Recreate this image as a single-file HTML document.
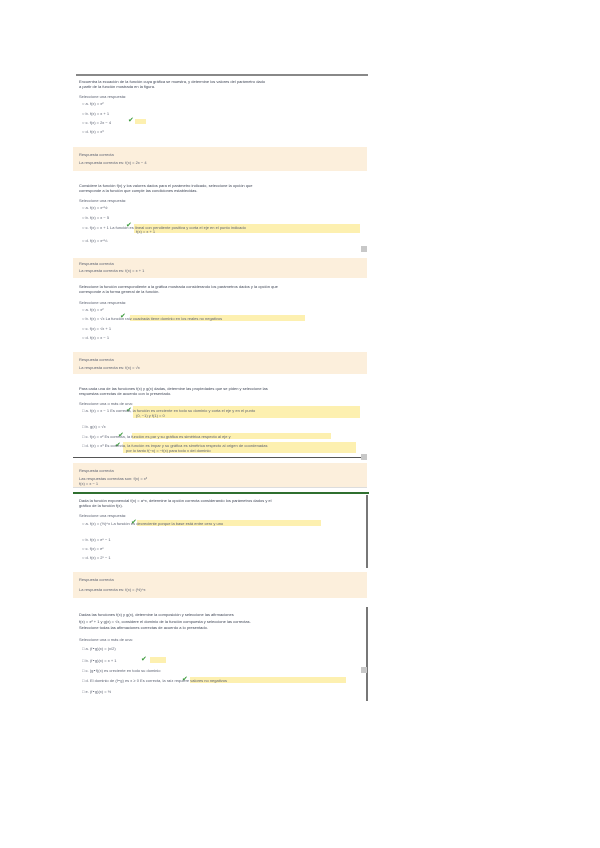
<!DOCTYPE html>
<html><head><meta charset="utf-8"><style>
body{margin:0;width:600px;height:848px;background:#fff;position:relative;overflow:hidden;font-family:"Liberation Sans",sans-serif}
.a{position:absolute}
.t{position:absolute;font-size:4px;line-height:5px;color:#5c6272;white-space:nowrap}
.d{color:#3f4656}
.fb{position:absolute;left:73px;width:294px;background:#fcefdc}
.hl{position:absolute;background:#fdf0b0}
.ck{position:absolute;color:#3a9a3a;font-size:7px;line-height:7px}
.sq{position:absolute;width:6px;height:6px;background:#c8c8c8}
.vl{position:absolute;width:2px;background:#777;left:366px}
</style></head><body>
<div class="a" style="left:76px;top:74px;width:292px;height:2px;background:#888"></div>
<div class="t d" style="left:79px;top:79px">Encuentra la ecuación de la función cuya gráfica se muestra, y determine los valores del parámetro dado</div>
<div class="t d" style="left:79px;top:84px">a partir de la función mostrada en la figura.</div>
<div class="t" style="left:79px;top:94px">Seleccione una respuesta:</div>
<div class="t" style="left:82px;top:101px">○ a.  f(x) = x²</div>
<div class="t" style="left:82px;top:111px">○ b.  f(x) = x + 1</div>
<div class="hl" style="left:135px;top:119px;width:11px;height:5px"></div>
<div class="t" style="left:82px;top:120px">○ c.  f(x) = 2x − 4</div><div class="ck" style="left:128px;top:117px">✔</div>
<div class="t" style="left:82px;top:129px">○ d.  f(x) = x³</div>
<div class="fb" style="top:147px;height:24px"></div>
<div class="t" style="left:79px;top:152px">Respuesta correcta</div>
<div class="t" style="left:79px;top:160px">La respuesta correcta es: f(x) = 2x − 4</div>

<div class="t d" style="left:79px;top:183px">Considere la función f(x) y los valores dados para el parámetro indicado, seleccione la opción que</div>
<div class="t d" style="left:79px;top:188px">corresponde a la función que cumple las condiciones establecidas.</div>
<div class="t" style="left:79px;top:198px">Seleccione una respuesta:</div>
<div class="t" style="left:82px;top:205px">○ a.  f(x) = x^½</div>
<div class="t" style="left:82px;top:215px">○ b.  f(x) = x − 5</div>
<div class="hl" style="left:134px;top:224px;width:226px;height:9px"></div>
<div class="ck" style="left:126px;top:222px">✔</div>
<div class="t" style="left:82px;top:225px">○ c.  f(x) = x + 1   La función es lineal con pendiente positiva y corta el eje en el punto indicado</div>
<div class="t" style="left:136px;top:229px">f(x) = x + 1</div>
<div class="t" style="left:82px;top:238px">○ d.  f(x) = x^⅓</div>
<div class="sq" style="left:361px;top:246px"></div>
<div class="fb" style="top:258px;height:20px"></div>
<div class="t" style="left:79px;top:261px">Respuesta correcta</div>
<div class="t" style="left:79px;top:268px">La respuesta correcta es: f(x) = x + 1</div>

<div class="t d" style="left:79px;top:284px">Seleccione la función correspondiente a la gráfica mostrada considerando los parámetros dados y la opción que</div>
<div class="t d" style="left:79px;top:289px">corresponde a la forma general de la función.</div>
<div class="t" style="left:79px;top:300px">Seleccione una respuesta:</div>
<div class="t" style="left:82px;top:307px">○ a.  f(x) = x²</div>
<div class="hl" style="left:130px;top:315px;width:175px;height:6px"></div>
<div class="ck" style="left:120px;top:313px">✔</div>
<div class="t" style="left:82px;top:316px">○ b.  f(x) = √x    La función raíz cuadrada tiene dominio en los reales no negativos</div>
<div class="t" style="left:82px;top:326px">○ c.  f(x) = √x + 1</div>
<div class="t" style="left:82px;top:335px">○ d.  f(x) = x − 1</div>
<div class="fb" style="top:352px;height:22px"></div>
<div class="t" style="left:79px;top:357px">Respuesta correcta</div>
<div class="t" style="left:79px;top:365px">La respuesta correcta es: f(x) = √x</div>

<div class="t d" style="left:79px;top:386px">Para cada una de las funciones f(x) y g(x) dadas, determine las propiedades que se piden y seleccione las</div>
<div class="t d" style="left:79px;top:391px">respuestas correctas de acuerdo con lo presentado.</div>
<div class="t" style="left:79px;top:401px">Seleccione una o más de una:</div>
<div class="hl" style="left:133px;top:406px;width:227px;height:12px"></div>
<div class="ck" style="left:126px;top:407px">✔</div>
<div class="t" style="left:82px;top:408px">□ a.  f(x) = x − 1    Es correcta, la función es creciente en todo su dominio y corta el eje y en el punto</div>
<div class="t" style="left:136px;top:413px">(0, −1) y f(1) = 0</div>
<div class="t" style="left:82px;top:424px">□ b.  g(x) = √x</div>
<div class="hl" style="left:132px;top:433px;width:199px;height:6px"></div>
<div class="ck" style="left:118px;top:432px">✔</div>
<div class="t" style="left:82px;top:434px">□ c.  f(x) = x²   Es correcta, la función es par y su gráfica es simétrica respecto al eje y</div>
<div class="hl" style="left:123px;top:442px;width:233px;height:11px"></div>
<div class="ck" style="left:115px;top:442px">✔</div>
<div class="t" style="left:82px;top:443px">□ d.  f(x) = x³   Es correcta, la función es impar y su gráfica es simétrica respecto al origen de coordenadas</div>
<div class="t" style="left:126px;top:448px">por lo tanto f(−x) = −f(x) para todo x del dominio</div>
<div class="a" style="left:73px;top:457px;width:292px;height:1px;background:#555"></div>
<div class="sq" style="left:361px;top:454px"></div>
<div class="fb" style="top:463px;height:25px"></div>
<div class="t" style="left:79px;top:468px">Respuesta correcta</div>
<div class="t" style="left:79px;top:476px">Las respuestas correctas son: f(x) = x³</div>
<div class="t" style="left:79px;top:481px">f(x) = x − 1</div>
<div class="a" style="left:73px;top:487px;width:294px;height:1px;background:#ddd"></div>

<div class="a" style="left:73px;top:492px;width:296px;height:2px;background:#2f6f2f"></div>
<div class="vl" style="top:495px;height:73px"></div>
<div class="t d" style="left:79px;top:498px">Dada la función exponencial f(x) = a^x, determine la opción correcta considerando los parámetros dados y el</div>
<div class="t d" style="left:79px;top:503px">gráfico de la función f(x).</div>
<div class="t" style="left:79px;top:513px">Seleccione una respuesta:</div>
<div class="hl" style="left:137px;top:520px;width:184px;height:6px"></div>
<div class="ck" style="left:131px;top:519px">✔</div>
<div class="t" style="left:82px;top:521px">○ a.  f(x) = (½)^x      La función es decreciente porque la base está entre cero y uno</div>
<div class="t" style="left:82px;top:537px">○ b.  f(x) = eˣ − 1</div>
<div class="t" style="left:82px;top:546px">○ c.  f(x) = eˣ</div>
<div class="t" style="left:82px;top:555px">○ d.  f(x) = 2ˣ − 1</div>
<div class="fb" style="top:572px;height:26px"></div>
<div class="t" style="left:79px;top:577px">Respuesta correcta</div>
<div class="t" style="left:79px;top:587px">La respuesta correcta es: f(x) = (½)^x</div>

<div class="vl" style="top:607px;height:94px"></div>
<div class="t d" style="left:79px;top:612px">Dadas las funciones f(x) y g(x), determine la composición y seleccione las afirmaciones</div>
<div class="t d" style="left:79px;top:619px">f(x) = x² + 1 y g(x) = √x, considere el dominio de la función compuesta y seleccione las correctas.</div>
<div class="t d" style="left:79px;top:625px">Seleccione todas las afirmaciones correctas de acuerdo a lo presentado.</div>
<div class="t" style="left:79px;top:637px">Seleccione una o más de una:</div>
<div class="t" style="left:82px;top:646px">□ a.  (f∘g)(x) = (x/2)</div>
<div class="hl" style="left:150px;top:657px;width:16px;height:6px"></div>
<div class="ck" style="left:141px;top:656px">✔</div>
<div class="t" style="left:82px;top:658px">□ b.  (f∘g)(x) = x + 1</div>
<div class="t" style="left:82px;top:668px">□ c.  (g∘f)(x) es creciente en todo su dominio</div>
<div class="sq" style="left:361px;top:667px"></div>
<div class="hl" style="left:190px;top:677px;width:156px;height:6px"></div>
<div class="ck" style="left:182px;top:676px">✔</div>
<div class="t" style="left:82px;top:678px">□ d.  El dominio de (f∘g) es x ≥ 0      Es correcta, la raíz requiere valores no negativos</div>
<div class="t" style="left:82px;top:689px">□ e.  (f∘g)(x) = ½</div>
</body></html>
